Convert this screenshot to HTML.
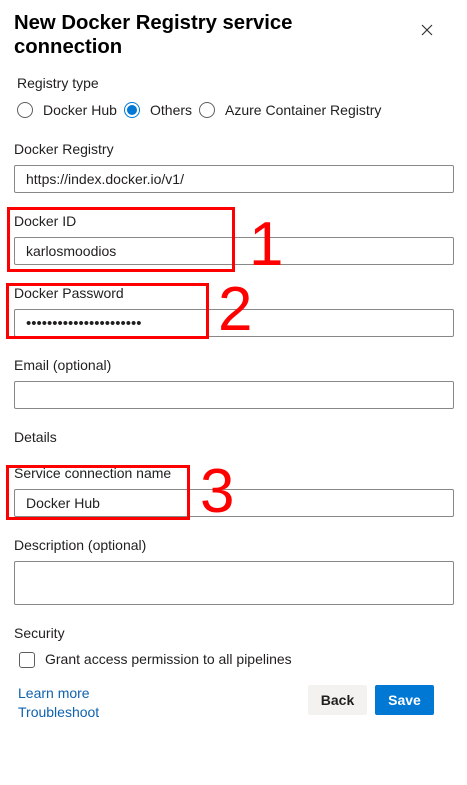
<!DOCTYPE html>
<html><head><style>
*{margin:0;padding:0;box-sizing:border-box}
body{width:467px;height:785px;background:#fff;font-family:"Liberation Sans",sans-serif;color:#201f1e;position:relative;overflow:hidden}
.a{position:absolute;white-space:nowrap}
.t{font-size:20.3px;font-weight:bold;line-height:24px;color:#000}
.l{font-size:14px;color:#201f1e}
.in{position:absolute;left:14px;width:440px;height:28px;border:1px solid #8a8886;border-radius:2px;font-size:14px;padding:6px 11px;line-height:15px}
.r{position:absolute;width:16px;height:16px;border:1px solid #605e5c;border-radius:50%}
.red{position:absolute;border:3px solid #f00}
.n{position:absolute;color:#f00;font-size:62px;line-height:60px}
.lk{color:#0f62ad;font-size:14px}
</style></head><body>
<div class="a t" style="left:14px;top:11px">New Docker Registry service<br>connection</div>
<svg class="a" style="left:421px;top:24px" width="12" height="12" viewBox="0 0 12 12"><path d="M1 1L11 11M11 1L1 11" stroke="#333" stroke-width="1.2"/></svg>
<div class="a l" style="left:17px;top:75px">Registry type</div>
<div class="r" style="left:17px;top:102px"></div>
<div class="a l" style="left:43px;top:102px">Docker Hub</div>
<div class="r" style="left:124px;top:102px;border-color:#0078d4"><div style="position:absolute;left:2px;top:2px;width:10px;height:10px;border-radius:50%;background:#0078d4"></div></div>
<div class="a l" style="left:150px;top:102px">Others</div>
<div class="r" style="left:199px;top:102px"></div>
<div class="a l" style="left:225px;top:102px">Azure Container Registry</div>
<div class="a l" style="left:14px;top:141px">Docker Registry</div>
<div class="in" style="top:165px">https://index.docker.io/v1/</div>
<div class="a l" style="left:14px;top:213px">Docker ID</div>
<div class="in" style="top:237px">karlosmoodios</div>
<div class="a l" style="left:14px;top:285px">Docker Password</div>
<div class="in" style="top:309px;font-size:15px">••••••••••••••••••••••</div>
<div class="a l" style="left:14px;top:357px">Email (optional)</div>
<div class="in" style="top:381px"></div>
<div class="a l" style="left:14px;top:429px">Details</div>
<div class="a l" style="left:14px;top:465px">Service connection name</div>
<div class="in" style="top:489px">Docker Hub</div>
<div class="a l" style="left:14px;top:537px">Description (optional)</div>
<div class="in" style="top:561px;height:44px"></div>
<div class="a l" style="left:14px;top:625px">Security</div>
<div style="position:absolute;left:19px;top:652px;width:16px;height:16px;border:1px solid #605e5c;border-radius:3px"></div>
<div class="a l" style="left:45px;top:651px">Grant access permission to all pipelines</div>
<div class="a lk" style="left:18px;top:685px">Learn more</div>
<div class="a lk" style="left:18px;top:704px">Troubleshoot</div>
<div class="a" style="left:308px;top:685px;width:59px;height:30px;background:#f3f2f1;border-radius:2px;font-size:14px;font-weight:bold;text-align:center;line-height:30px">Back</div>
<div class="a" style="left:375px;top:685px;width:59px;height:30px;background:#0078d4;color:#fff;border-radius:2px;font-size:14px;font-weight:bold;text-align:center;line-height:30px">Save</div>
<div class="red" style="left:7px;top:207px;width:228px;height:65px"></div>
<div class="red" style="left:6px;top:283px;width:203px;height:56px"></div>
<div class="red" style="left:6px;top:465px;width:184px;height:55px"></div>
<div class="n" style="left:249px;top:215px">1</div>
<div class="n" style="left:218px;top:280px">2</div>
<div class="n" style="left:200px;top:462px">3</div>
</body></html>
